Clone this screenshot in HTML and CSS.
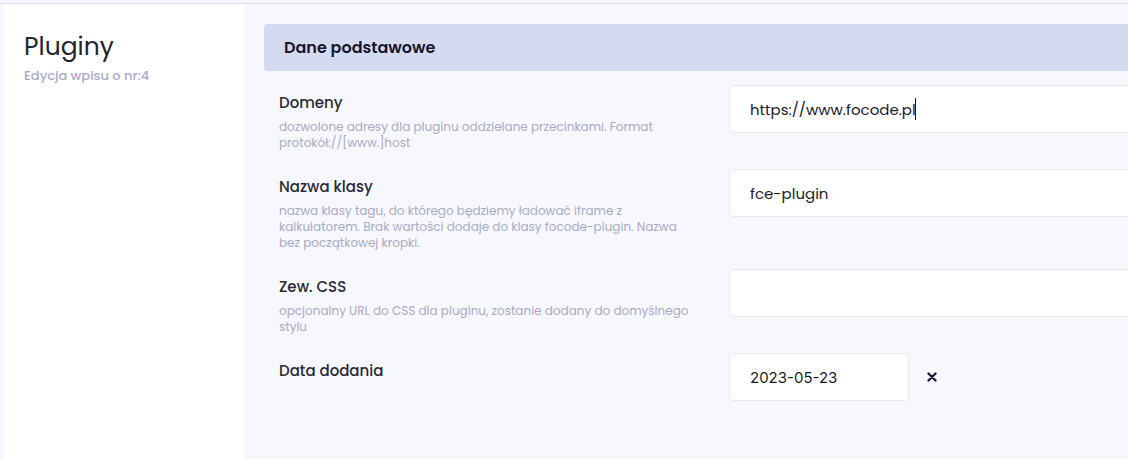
FILE: index.html
```html
<!DOCTYPE html>
<html lang="pl">
<head>
    <meta charset="UTF-8">
    <meta name="viewport" content="width=device-width, initial-scale=1.0">
    <title>Pluginy</title>
    <link rel="stylesheet" href="styles.css">
</head>
<body>
    <div class="layout">
        <!-- Left column -->
        <aside class="sidebar">
            <h1 class="page-title">Pluginy</h1>
            <div class="page-sub">Edycja wpisu o nr:4</div>
        </aside>

        <!-- Form -->
        <main class="content">
            <div class="section-head">Dane podstawowe</div>

            <div class="form-row">
                <div class="field-info">
                    <div class="field-label">Domeny</div>
                    <div class="field-hint">dozwolone adresy dla pluginu oddzielane przecinkami. Format protokół://[www.]host</div>
                </div>
                <div class="field-input">
                    <input class="text-input" type="text" value="https://www.focode.pl">
                    <span class="caret"></span>
                </div>
            </div>

            <div class="form-row">
                <div class="field-info">
                    <div class="field-label">Nazwa klasy</div>
                    <div class="field-hint">nazwa klasy tagu, do którego będziemy ładować iframe z kalkulatorem. Brak wartości dodaje do klasy focode-plugin. Nazwa bez początkowej kropki.</div>
                </div>
                <div class="field-input">
                    <input class="text-input" type="text" value="fce-plugin">
                </div>
            </div>

            <div class="form-row">
                <div class="field-info">
                    <div class="field-label">Zew. CSS</div>
                    <div class="field-hint">opcjonalny URL do CSS dla pluginu, zostanie dodany do domyślnego stylu</div>
                </div>
                <div class="field-input">
                    <input class="text-input" type="text" value="">
                </div>
            </div>

            <div class="form-row">
                <div class="field-info">
                    <div class="field-label">Data dodania</div>
                </div>
                <div class="field-input date-wrap">
                    <input class="text-input date-input" type="text" value="2023-05-23">
                    <button class="clear-btn" type="button" aria-label="Wyczyść">
                        <svg width="10" height="10" viewBox="0 0 10 10">
                            <path d="M1.5 1.5 L8.5 8.5 M8.5 1.5 L1.5 8.5" stroke="#1d1a36" stroke-width="2.4" stroke-linecap="round"/>
                        </svg>
                    </button>
                </div>
            </div>
        </main>
    </div>
</body>
</html>
```

FILE: styles.css
```css
html, body {
    margin: 0;
    padding: 0;
    overflow: hidden;
}

body {
    font-family: Poppins, Inter, "Noto Sans", sans-serif;
    background-color: #f6f7fc;
    color: #2a2a35;
    height: 459px;
}

.layout {
    display: flex;
    margin-top: 3px;
    border-top: 1px solid #dedfe6;
    padding-left: 4px;
    height: 455px;
}

.sidebar {
    width: 240px;
    flex: 0 0 240px;
    background: #ffffff;
    padding: 28px 20px 0 20px;
    box-sizing: border-box;
}

.page-title {
    margin: 0;
    font-size: 25px;
    font-weight: 400;
    line-height: 30px;
    color: #24242e;
}

.page-sub {
    margin-top: 4px;
    font-size: 13px;
    font-weight: 500;
    color: #a8acc6;
}

.content {
    flex: 1 0 auto;
    min-width: 1000px;
    background: #f7f8fd;
    padding: 20px 0 0 20px;
}

.section-head {
    background: #d4dbf0;
    border-radius: 4px 0 0 4px;
    height: 47px;
    line-height: 47px;
    padding-left: 20px;
    font-size: 16px;
    font-weight: 600;
    color: #18152c;
    margin-bottom: 14px;
}

.form-row {
    display: flex;
    gap: 20px;
    margin-bottom: 18px;
}

.field-info {
    width: 445px;
    flex: 0 0 445px;
    padding-left: 15px;
    padding-right: 10px;
    box-sizing: border-box;
}

.field-label {
    padding-top: 7px;
    font-size: 15px;
    font-weight: 500;
    line-height: 22px;
    color: #2a2a35;
}

.field-hint {
    margin-top: 5px;
    font-size: 12px;
    line-height: 16px;
    color: #a7abc3;
}

.field-input {
    flex: 1;
    position: relative;
}

.text-input {
    display: block;
    width: 100%;
    height: 48px;
    box-sizing: border-box;
    border: 1px solid #e6e8f0;
    border-radius: 4px;
    background: #ffffff;
    padding: 0 20px;
    font-family: Poppins, Inter, "Noto Sans", sans-serif;
    font-size: 15px;
    color: #1b1b2b;
    outline: none;
}

.caret {
    position: absolute;
    left: 186px;
    top: 13px;
    width: 1px;
    height: 22px;
    background: #111;
}

.date-wrap {
    display: flex;
    align-items: center;
}

.date-input {
    width: 180px;
    font-family: Inter, "Noto Sans", sans-serif;
}

.clear-btn {
    border: none;
    background: none;
    padding: 0;
    margin-left: 18px;
    width: 10px;
    height: 10px;
    display: flex;
    cursor: pointer;
}
```
